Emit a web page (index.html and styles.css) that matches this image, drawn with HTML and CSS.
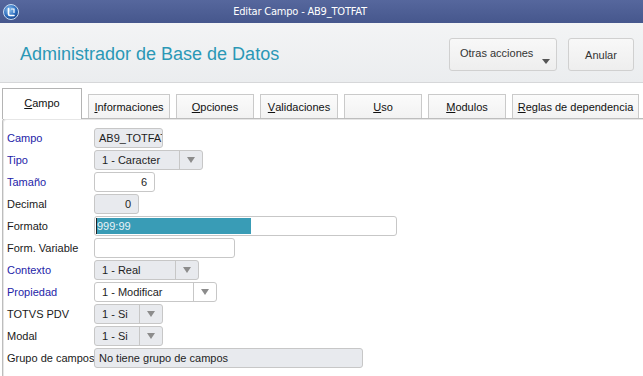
FILE: index.html
```html
<!DOCTYPE html>
<html lang="es">
<head>
  <meta charset="UTF-8" />
  <meta name="viewport" content="width=device-width, initial-scale=1.0" />
  <title>Editar Campo - AB9_TOTFAT</title>
  <link rel="stylesheet" href="styles.css">
</head>
<body>
  <div class="titlebar">
    <svg class="app-icon" width="16" height="16" viewBox="0 0 16 16">
      <defs>
        <radialGradient id="orb" cx="40%" cy="35%" r="70%">
          <stop offset="0" stop-color="#8fc2ee" />
          <stop offset="0.6" stop-color="#2f6fbf" />
          <stop offset="1" stop-color="#173f82" />
        </radialGradient>
      </defs>
      <circle cx="8" cy="8" r="7.5" fill="url(#orb)" stroke="#c9dcf2" stroke-width="1" />
      <path d="M5.5 4.5 v5.5 a1.5 1.5 0 0 0 1.5 1.5 h4" fill="none" stroke="#fff" stroke-width="1.6" stroke-linecap="round" />
      <path d="M8.5 5 h2.5 v3.5" fill="none" stroke="#fff" stroke-width="1.2" stroke-linecap="round" />
    </svg>
    <span class="titlebar-text">Editar Campo - AB9_TOTFAT</span>
  </div>

  <header class="header">
    <h1>Administrador de Base de Datos</h1>
    <div class="actions">
      <button class="btn btn-menu">Otras acciones<span class="caret"></span></button>
      <button class="btn btn-cancel">Anular</button>
    </div>
  </header>

  <nav class="tabs">
    <div class="tab active"><u>C</u>ampo</div>
    <div class="tab tab-m"><u>I</u>nformaciones</div>
    <div class="tab"><u>O</u>pciones</div>
    <div class="tab"><u>V</u>alidaciones</div>
    <div class="tab"><u>U</u>so</div>
    <div class="tab"><u>M</u>odulos</div>
    <div class="tab tab-l"><u>R</u>eglas de dependencia</div>
  </nav>

  <section class="panel">
    <div class="form">
      <label class="lbl req">Campo</label>
      <div class="ctl ro w-69">AB9_TOTFAT</div>

      <label class="lbl req">Tipo</label>
      <div class="ctl sel ro w-109"><span class="val">1 - Caracter</span><span class="arrow"></span></div>

      <label class="lbl req">Tamaño</label>
      <div class="ctl num w-61">6</div>

      <label class="lbl">Decimal</label>
      <div class="ctl num ro w-45">0</div>

      <label class="lbl">Formato</label>
      <div class="ctl w-303 focus"><span class="selected">999:99</span></div>

      <label class="lbl">Form. Variable</label>
      <div class="ctl w-141"></div>

      <label class="lbl req">Contexto</label>
      <div class="ctl sel ro w-105"><span class="val">1 - Real</span><span class="arrow"></span></div>

      <label class="lbl req">Propiedad</label>
      <div class="ctl sel w-123"><span class="val">1 - Modificar</span><span class="arrow"></span></div>

      <label class="lbl">TOTVS PDV</label>
      <div class="ctl sel ro w-69"><span class="val">1 - Si</span><span class="arrow"></span></div>

      <label class="lbl">Modal</label>
      <div class="ctl sel ro w-69"><span class="val">1 - Si</span><span class="arrow"></span></div>

      <label class="lbl">Grupo de campos</label>
      <div class="ctl ro w-269">No tiene grupo de campos</div>
    </div>
  </section>
</body>
</html>
```

FILE: styles.css
```css
body {
  margin: 0;
  background: #fff;
  font-family: 'Liberation Sans', Arial, sans-serif;
  font-size: 11px;
  color: #222;
  overflow: hidden;
}

/* window title */
.titlebar {
  height: 23px;
  display: flex;
  align-items: center;
  background: linear-gradient(#56679d, #46578d);
}

.app-icon {
  margin-left: 3px;
  flex: none;
}

.titlebar-text {
  flex: 1;
  text-align: center;
  padding-right: 62px;
  color: #fff;
  font-family: 'Liberation Sans Narrow', 'DejaVu Sans Condensed', sans-serif;
  font-size: 11px;
  letter-spacing: -0.2px;
}

/* header */
.header {
  height: 59px;
  display: flex;
  align-items: center;
  justify-content: space-between;
  padding: 0 9px 0 20px;
  background: linear-gradient(#f3f4f5, #ebedef);
  border-bottom: 1px solid #d6d7d9;
}

.header h1 {
  margin: 3px 0 0;
  font-size: 18px;
  font-weight: normal;
  color: #2b98b6;
}

.actions {
  display: flex;
  gap: 11px;
  margin-top: 4px;
}

.btn {
  position: relative;
  height: 33px;
  border: 1px solid #d0d0d0;
  border-radius: 3px;
  background: linear-gradient(#f8f8f8, #eeeeee);
  font-family: inherit;
  font-size: 11px;
  color: #333;
  padding: 0;
}

.btn-menu {
  width: 108px;
  text-align: left;
  padding: 0 0 3px 10px;
}

.btn-cancel {
  width: 66px;
}

.caret {
  position: absolute;
  right: 6px;
  bottom: 6px;
  border-left: 4px solid transparent;
  border-right: 4px solid transparent;
  border-top: 5px solid #555;
}

/* tabs */
.tabs {
  display: flex;
  align-items: flex-end;
  gap: 6px;
  height: 30px;
  margin-top: 5px;
  padding-left: 2px;
}

.tab {
  box-sizing: border-box;
  width: 78px;
  height: 24px;
  display: flex;
  align-items: center;
  justify-content: center;
  border: 1px solid #cacaca;
  border-bottom: none;
  background: linear-gradient(#fbfbfb, #f2f2f2);
  color: #111;
  white-space: nowrap;
}

.tab u {
  text-decoration-thickness: 1px;
}

.tab-m {
  width: 82px;
}

.tab-l {
  width: 127px;
}

.tab.active {
  width: 80px;
  height: 31px;
  margin-bottom: -1px;
  position: relative;
  z-index: 1;
  background: #fff;
  border-color: #b4b4b4;
  padding-bottom: 2px;
}

/* panel with the form */
.panel {
  margin-left: 2px;
  height: 260px;
  border-top: 1px solid #bdbdbd;
  border-left: 1px solid #bdbdbd;
  border-top-left-radius: 4px;
  box-shadow: inset 1px 1px 0 #e6e6e6;
  padding: 9px 0 0 4px;
}

.form {
  display: grid;
  grid-template-columns: 87px auto;
  grid-auto-rows: 20px;
  row-gap: 2px;
  align-items: center;
  justify-items: start;
}

.lbl {
  white-space: nowrap;
  color: #1a1a1a;
}

.lbl.req {
  color: #2424a8;
}

.ctl {
  box-sizing: border-box;
  height: 20px;
  line-height: 18px;
  border: 1px solid #c7c7c7;
  border-radius: 3px;
  background: #fff;
  padding: 0 4px;
  white-space: nowrap;
  overflow: hidden;
  color: #1e1e1e;
}

.ctl.ro {
  background: #e8eaee;
}

.ctl.num {
  text-align: right;
  padding-right: 7px;
}

.ctl.sel {
  display: flex;
  padding: 0;
}

.sel .val {
  flex: 1;
  padding-left: 7px;
}

.sel .arrow {
  width: 22px;
  border-left: 1px solid #c7c7c7;
  display: flex;
  align-items: center;
  justify-content: center;
}

.sel .arrow::after {
  content: "";
  border-left: 4px solid transparent;
  border-right: 4px solid transparent;
  border-top: 6px solid #8c8c8c;
}

.ctl.focus {
  padding-left: 1px;
}

.selected {
  display: inline-block;
  width: 154px;
  height: 16px;
  line-height: 16px;
  margin-top: 1px;
  background: #399cb6;
  color: #e9f3f6;
  border-left: 1px solid #222;
}

.w-45 { width: 45px; }
.w-61 { width: 61px; }
.w-69 { width: 69px; }
.w-105 { width: 105px; }
.w-109 { width: 109px; }
.w-123 { width: 123px; }
.w-141 { width: 141px; }
.w-269 { width: 269px; }
.w-303 { width: 303px; }
```
